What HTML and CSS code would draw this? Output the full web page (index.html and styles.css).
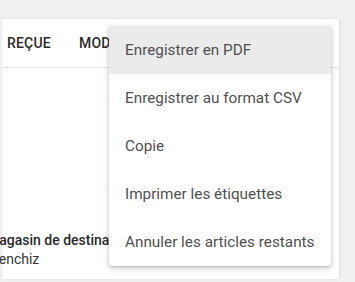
FILE: index.html
```html
<!DOCTYPE html>
<html lang="fr">
<head>
<meta charset="utf-8">
<link rel="stylesheet" href="styles.css">
</head>
<body>
<div class="page">
  <div class="card">
    <div class="tabs">
      <div class="tab">REÇUE</div>
      <div class="tab">MODIFIÉE</div>
    </div>
    <div class="content">
      <div class="field">
        <div class="label">Magasin de destination</div>
        <div class="value">Benchiz</div>
      </div>
    </div>
  </div>
  <ul class="menu">
    <li class="item active">Enregistrer en PDF</li>
    <li class="item">Enregistrer au format CSV</li>
    <li class="item">Copie</li>
    <li class="item">Imprimer les étiquettes</li>
    <li class="item">Annuler les articles restants</li>
  </ul>
</div>
</body>
</html>
```

FILE: styles.css
```css
html, body {
  margin: 0;
  padding: 0;
  background: #f1f1f1;
  font-family: Roboto, "Liberation Sans", sans-serif;
  width: 355px;
  height: 282px;
  overflow: hidden;
}
.page {
  position: relative;
  width: 355px;
  height: 282px;
  padding: 19px 16px 0 2px;
  box-sizing: border-box;
}
.card {
  background: #fff;
  height: 260px;
  box-shadow: 1px 0 3px rgba(0,0,0,0.08);
  display: flex;
  flex-direction: column;
}
.tabs {
  height: 48px;
  border-bottom: 1px solid #e4e4e4;
  display: flex;
  align-items: center;
  gap: 28px;
  padding-left: 5px;
  overflow: hidden;
  white-space: nowrap;
}
.tab {
  font-size: 14px;
  font-weight: 500;
  color: #2b2b2b;
  letter-spacing: 0.2px;
}
.content {
  flex: 1;
  display: flex;
  flex-direction: column;
  justify-content: flex-end;
  padding-bottom: 10px;
}
.field {
  font-size: 14px;
  line-height: 19px;
  white-space: nowrap;
}
.label {
  font-weight: 500;
  color: #2a2a2a;
  margin-left: -15px;
}
.value {
  color: #333;
  margin-left: -12px;
}
.menu {
  position: absolute;
  left: 109px;
  top: 26px;
  width: 222px;
  margin: 0;
  padding: 0;
  list-style: none;
  background: #fff;
  border-radius: 3px;
  box-shadow: 0 2px 6px rgba(0,0,0,0.22), 0 1px 2px rgba(0,0,0,0.12);
}
.item {
  height: 48px;
  display: flex;
  align-items: center;
  padding: 0 16px;
  font-size: 15.3px;
  color: #505050;
  white-space: nowrap;
}
.item.active {
  background: #ebebeb;
}
```
